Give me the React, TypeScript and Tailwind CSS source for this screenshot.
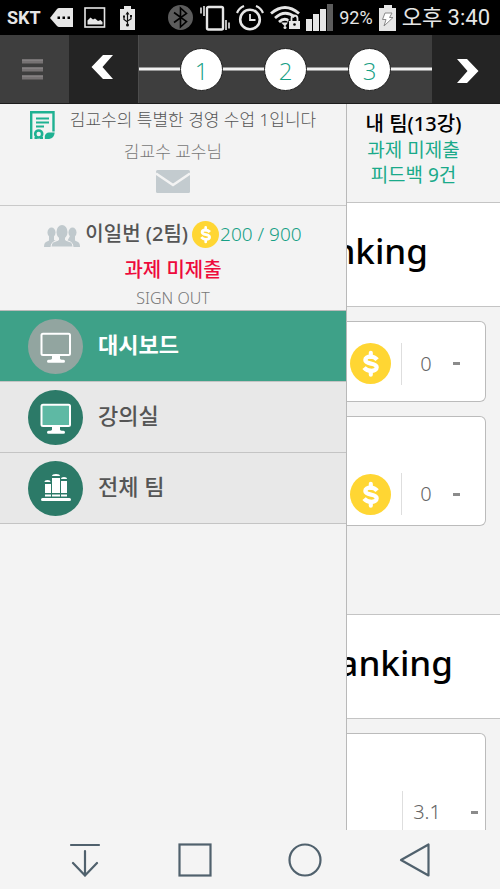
import React from 'react';

const CoinIcon: React.FC<{ className: string }> = ({ className }) => (
  <svg viewBox="0 0 40 40" className={className} aria-hidden="true">
    <circle cx="20" cy="20" r="20" fill="#ffd633" />
    <g fill="none" stroke="#fff">
      <path d="M20.300 9.500v4M20.300 27v4" strokeWidth="4" strokeLinecap="round" />
      <path d="M26.500 16.300C24.700 14.200 22.300 13.300 20 13.300C17 13.300 15 14.600 15 16.600C15 21.500 26 18.600 26 23.600C26 25.800 23.700 27.100 20.600 27.100C17.900 27.100 15.400 26 13.700 24" strokeWidth="4.200" />
    </g>
  </svg>
);

const MonitorIcon: React.FC<{ circle: string; screen: string }> = ({ circle, screen }) => (
  <svg viewBox="0 0 55 55" className="h-[55px] w-[55px] shrink-0" aria-hidden="true">
    <circle cx="27.500" cy="27.500" r="27.500" fill={circle} />
    <rect x="13.500" y="14.700" width="28.500" height="21.300" rx="1.500" fill={screen} stroke="#fff" strokeWidth="2" />
    <path d="M24 36h8v3.500c0 1 1 1.200 3.500 1.300a1.500 1.500 0 0 1 0 3h-15a1.500 1.500 0 0 1 0-3c2.500-.1 3.500-.3 3.500-1.300z" fill="#fff" />
  </svg>
);

const BooksIcon = () => (
  <svg viewBox="0 0 55 55" className="h-[55px] w-[55px] shrink-0" aria-hidden="true">
    <circle cx="27.500" cy="27.500" r="27.500" fill="#2c7a68" />
    <g fill="#fff">
      <path d="M16.500 21q0-2 3-2t3 2zM24 15q0-2 4-2t4 2zM33 18q0-2 3-2t3 2z" />
      <path d="M17 23h6v9h-6zM24 17h8v15h-8zM33 20h6v12h-6z" />
      <path d="M17 33.500h6V35.500h-6zM24 33.500h8V35.500h-8zM33 33.500h6V35.500h-6z" />
      <rect x="13" y="37" width="30" height="3" rx="1.500" />
    </g>
  </svg>
);

const StatusBar = () => (
  <div className="flex h-[35px] shrink-0 items-center justify-between bg-black pl-[7px] pr-[10px] text-[#e6e6e6]">
    <div className="flex items-center">
      <span className="w-[43px] font-['Roboto'] text-lg font-bold">SKT</span>
      <svg viewBox="0 0 24 20" className="mr-[10px] h-5 w-6" aria-hidden="true">
        <path d="M0 10L7 1q1-1 2-1h14v19H9q-1 0-2-1z" fill="currentColor" />
        <path d="M7.500 8.500h2.500v2.500h-2.500zM12.500 8.500h2.500v2.500h-2.500zM17.500 8.500h2.500v2.500h-2.500z" fill="#000" />
      </svg>
      <svg viewBox="0 0 22 22" className="mr-[14px] h-[22px] w-[22px]" aria-hidden="true">
        <rect x="1" y="1" width="19.500" height="19" fill="none" stroke="currentColor" strokeWidth="1.600" />
        <path d="M3.500 17.500v-4l3-3 2.500 2 2-1 3 2.500 2.500-1 2 2v2.500z" fill="currentColor" />
      </svg>
      <svg viewBox="0 0 16 24" className="mr-8 h-6 w-4" aria-hidden="true">
        <path d="M4 0h7v3h4v21H0V3h4z" fill="currentColor" />
        <g fill="none" stroke="#111" strokeWidth="1.200">
          <path d="M7.500 6.500v13M4 11v2.500l3.500 2.500M11 10v3L7.500 15" />
        </g>
        <path d="M5.500 8.500l2-3 2 3zM3 9.500h2v2H3zM10 9h2v2h-2z" fill="#111" />
        <circle cx="7.500" cy="19" r="1.500" fill="#111" />
      </svg>
      <svg viewBox="0 0 25 25" className="h-[25px] w-[25px]" aria-hidden="true">
        <circle cx="12.500" cy="12.500" r="12.500" fill="#5c5c5c" />
        <path d="M6 7.500l12.500 9-6 5.500V3l6 5.500-12.500 9" fill="none" stroke="#000" strokeWidth="1.600" />
      </svg>
    </div>
    <div className="flex items-center">
      <svg viewBox="0 0 30 26" className="mr-[6px] h-[26px] w-[30px]" aria-hidden="true">
        <rect x="7" y="2" width="16" height="22.500" rx="1.500" fill="none" stroke="currentColor" strokeWidth="2.400" />
        <path d="M1 2.500v6M4 1v10M26 15v10M29 17.500v6" stroke="currentColor" strokeWidth="1.600" />
      </svg>
      <svg viewBox="0 0 28 26" className="mr-[6px] h-[26px] w-7" aria-hidden="true">
        <g fill="none" stroke="currentColor">
          <circle cx="14" cy="14.500" r="9.800" strokeWidth="2.600" />
          <path d="M14 9v6h5.500" strokeWidth="1.800" />
          <path d="M1 8Q3 3 8 1M20 1q5 2 7 7" strokeWidth="2.200" />
        </g>
      </svg>
      <svg viewBox="0 0 30 24" className="mr-[6px] h-6 w-[30px]" aria-hidden="true">
        <g fill="none" stroke="currentColor" strokeWidth="2.800">
          <path d="M1 7.500Q15-4.500 29 7.500" />
          <path d="M5 12Q15 3 24.500 11" />
          <path d="M9 16q5.500-5 10-1" />
        </g>
        <path d="M11 16.500h7l-3 4z" fill="currentColor" />
        <circle cx="15" cy="21.500" r="1.500" fill="currentColor" />
        <path d="M18.500 13.500h12V24h-12z" fill="#000" />
        <path d="M19 15h11v8H19z" fill="currentColor" />
        <path d="M21.500 15v-2.500a3 3 0 0 1 6 0V15" fill="none" stroke="currentColor" strokeWidth="1.800" />
        <circle cx="24.500" cy="18.500" r="1.300" fill="#000" />
      </svg>
      <svg viewBox="0 0 27 27" className="mr-[6px] h-[27px] w-[27px]" aria-hidden="true">
        <path d="M0 15h6v12H0zM7 10h6v17H7zM14 5h6v22h-6z" fill="currentColor" />
        <path d="M21 0h6v27h-6z" fill="#5c5c5c" />
      </svg>
      <span className="mr-[6px] font-['Roboto'] text-lg">92%</span>
      <svg viewBox="0 0 17 26" className="mr-[6px] h-[26px] w-[17px]" aria-hidden="true">
        <path d="M5 0h8v3h4v23H0V3h5z" fill="currentColor" />
        <path d="M6 8h7l-2.500 4.500H14L5 21l2-6.500H3.500z" fill="#fff" stroke="#8a8a8a" strokeWidth="1" />
      </svg>
      <span className="whitespace-nowrap font-['Roboto','Noto_Sans_CJK_KR',sans-serif] text-[22px] leading-8">오후 3:40</span>
    </div>
  </div>
);

const steps = [1, 2, 3];

const Header = () => (
  <header className="flex h-[69px] shrink-0 border-b border-[#1c1c1c] bg-[#3e3e3e]">
    <button aria-label="메뉴" className="flex w-[69px] items-center justify-center pr-1">
      <svg viewBox="0 0 21 21" className="h-[21px] w-[21px]" aria-hidden="true">
        <path d="M0 .5h21v4H0zM0 8.500h21v4H0zM0 16.500h21v4H0z" fill="#767273" />
        <path d="M0 .5h21v1H0zM0 8.500h21v1H0zM0 16.500h21v1H0z" fill="#918e8f" />
      </svg>
    </button>
    <button aria-label="이전" className="flex w-[69px] items-center justify-center bg-[#242424] pb-1 pr-1">
      <svg viewBox="0 0 22 24" className="h-6 w-[22px]" aria-hidden="true">
        <path d="M12 0h10l-10.500 12L22 24H12L.5 12z" fill="#fff" />
      </svg>
    </button>
    <nav className="relative flex flex-1 items-center justify-evenly border-l border-[#4c4c4c]">
      <div className="absolute inset-x-0 top-1/2 h-[3px] -translate-y-1/2 bg-[#f1f1f1]"></div>
      {steps.map((step) => (
        <button
          key={step}
          className="relative flex h-[43px] w-[43px] items-center justify-center rounded-full border border-[#222] bg-white pt-1 font-['Open_Sans'] text-2xl font-light text-[#16a085]"
        >
          {step}
        </button>
      ))}
    </nav>
    <button aria-label="다음" className="flex w-[68px] items-center justify-center bg-[#242424] pl-1 pt-1">
      <svg viewBox="0 0 22 24" className="h-6 w-[22px]" aria-hidden="true">
        <path d="M0 0h10l11.500 12L10 24H0l10.500-12z" fill="#fff" />
      </svg>
    </button>
  </header>
);

const menuItems = [
  { label: '대시보드', icon: <MonitorIcon circle="#92a5a0" screen="#92a5a0" />, active: true },
  { label: '강의실', icon: <MonitorIcon circle="#2c7a68" screen="#5eb9a4" />, active: false },
  { label: '전체 팀', icon: <BooksIcon />, active: false },
];

const Drawer = () => (
  <aside className="w-[347px] shrink-0 border-r border-[#b9b9b9] bg-[#f3f3f3]">
    <section className="flex h-[102px] flex-col items-center border-b border-[#c9c9c9] pt-[2px]">
      <div className="flex items-start gap-[15px]">
        <svg viewBox="0 0 25 28" className="mt-[5px] h-7 w-[25px]" aria-hidden="true">
          <path d="M1.200 28V1.200h22.300v19.300" fill="none" stroke="#1fb192" strokeWidth="2.400" />
          <path d="M14.800 28v-3q1-3.500 4-3.500h5.900q-.5 5.500-5.500 6.500z" fill="#1fb192" />
          <path d="M6 7.500h13M6 11.500h13M6 15.500h8" stroke="#1fb192" strokeWidth="2" />
          <circle cx="8.700" cy="23" r="3.500" fill="none" stroke="#1fb192" strokeWidth="2.600" />
          <path d="M4.500 26h3v2h-3zM10 26h3v2h-3z" fill="#1fb192" />
        </svg>
        <h1 className="whitespace-nowrap text-[17px] font-light leading-[28px] text-[#555]">김교수의 특별한 경영 수업 1입니다</h1>
      </div>
      <p className="-mt-px text-[17px] font-light leading-[28px] text-[#777]">김교수 교수님</p>
      <button aria-label="메시지" className="mt-1">
        <svg viewBox="0 0 34 23" className="h-[23px] w-[34px]" aria-hidden="true">
          <rect width="34" height="23" rx="1.500" fill="#c3cbcf" />
          <path d="M0 3.500l17 11.500L34 3.500" fill="none" stroke="#f3f3f3" strokeWidth="2.500" />
        </svg>
      </button>
    </section>

    <section className="flex h-[104px] flex-col items-center pt-3">
      <div className="flex items-center whitespace-nowrap">
        <svg viewBox="0 0 36 22" className="mr-[5px] mt-1 h-[22px] w-9" aria-hidden="true">
          <g fill="#c0c9cd">
            <ellipse cx="7.500" cy="7.500" rx="4" ry="5" />
            <path d="M5 11h5v4l3 1.500V22H0q0-4 2-5l3-1.500z" />
            <ellipse cx="28.500" cy="7.500" rx="4" ry="5" />
            <path d="M26 11h5v4.500l3 1.500q2 1 2 5H23v-5.500z" />
            <path d="M14.500 11h7v4l5 2q2.500 1 2.500 5H7q0-4 2.500-5l5-2z" stroke="#f3f3f3" strokeWidth="1" />
            <ellipse cx="18" cy="7" rx="5.500" ry="7" />
          </g>
        </svg>
        <span className="text-xl font-medium leading-8 text-[#555]">이일번 (2팀)</span>
        <CoinIcon className="ml-1 mr-px h-[27px] w-[27px]" />
        <span className="text-[19px] font-light leading-8 text-[#16a085]">200 / 900</span>
      </div>
      <p className="mt-1 text-xl font-medium leading-8 text-[#ee0a3c]">과제 미제출</p>
      <button className="text-base font-light leading-6 text-[#777]">SIGN OUT</button>
    </section>

    <nav className="border-t border-[#bbb]">
      {menuItems.map((item) => (
        <a
          key={item.label}
          href="#"
          className={`flex h-[71px] items-center gap-[15px] border-b border-[#c4c4c4] pl-7 text-[22px] leading-8 ${
            item.active ? 'bg-[#3ea188] font-bold text-white' : 'bg-[#e8e8e8] font-medium text-[#555]'
          }`}
        >
          {item.icon}
          <span className="-mt-1">{item.label}</span>
        </a>
      ))}
    </nav>
  </aside>
);

const TeamScore: React.FC<{ score: string }> = ({ score }) => (
  <div className="flex items-center">
    <CoinIcon className="h-[41px] w-[41px] shrink-0" />
    <div className="ml-[10px] h-[42px] w-px shrink-0 bg-[#dedede]"></div>
    <span className="w-12 text-center text-xl font-light text-[#666]">{score}</span>
    <div className="ml-[3px] mr-[25px] h-[3px] w-[7px] shrink-0 bg-[#8b8b8b]"></div>
  </div>
);

const Content = () => (
  <main className="min-w-0 flex-1 overflow-hidden bg-[#f3f3f3]">
    <div className="flex h-[99px] flex-col items-center border-b border-[#c4c4c4] pr-5 pt-[6px]">
      <p className="whitespace-nowrap text-xl font-medium leading-7 text-black">내 팀(13강)</p>
      <p className="whitespace-nowrap text-[19px] leading-[25px] text-[#1aaa8a]">과제 미제출</p>
      <p className="whitespace-nowrap text-[19px] leading-[25px] text-[#1aaa8a]">피드백 9건</p>
    </div>

    <section>
      <h2 className="flex h-[104px] items-center justify-end border-b border-[#c4c4c4] bg-white pb-[6px] pr-[72px] text-[35px] font-medium text-black">Ranking</h2>
      <div className="flex flex-col gap-[14px] pb-[88px] pr-[14px] pt-[14px]">
        <div className="flex h-[81px] items-center justify-end rounded-r-md border border-l-0 border-[#bbb] bg-white pt-1">
          <TeamScore score="0" />
        </div>
        <div className="flex h-[110px] items-end justify-end rounded-r-md border border-l-0 border-[#bbb] bg-white pb-[10px]">
          <TeamScore score="0" />
        </div>
      </div>
    </section>

    <section>
      <h2 className="flex h-[105px] items-center justify-end border-y border-[#c4c4c4] bg-white pb-[6px] pr-[47px] text-[35px] font-medium text-black">Ranking</h2>
      <div className="pr-[14px] pt-[14px]">
        <div className="flex h-[110px] items-end justify-end rounded-r-md border border-l-0 border-[#bbb] bg-white pb-[9px]">
          <div className="flex items-center">
            <div className="h-[42px] w-px bg-[#dedede]"></div>
            <span className="w-12 text-center text-xl font-light text-[#666]">3.1</span>
            <div className="ml-5 mr-[7px] h-[3px] w-[7px] bg-[#8b8b8b]"></div>
          </div>
        </div>
      </div>
    </section>
  </main>
);

const SystemNav = () => (
  <nav className="flex h-[59px] shrink-0 items-center justify-center gap-[76px] bg-[#f4f4f4] text-[#50616d]">
    <button aria-label="알림창 내리기">
      <svg viewBox="0 0 34 34" className="h-[34px] w-[34px]" fill="none" stroke="currentColor" strokeWidth="2.200" strokeLinecap="round" aria-hidden="true">
        <path d="M3 2h28M17 8v24M5 20l12 12.500L29 20" />
      </svg>
    </button>
    <button aria-label="최근 앱">
      <svg viewBox="0 0 34 34" className="h-[34px] w-[34px]" fill="none" stroke="currentColor" strokeWidth="2.200" aria-hidden="true">
        <rect x="1.500" y="1.500" width="31" height="31" />
      </svg>
    </button>
    <button aria-label="홈">
      <svg viewBox="0 0 34 34" className="h-[34px] w-[34px]" fill="none" stroke="currentColor" strokeWidth="2.200" aria-hidden="true">
        <circle cx="17" cy="17" r="15.500" />
      </svg>
    </button>
    <button aria-label="뒤로">
      <svg viewBox="0 0 34 34" className="h-[34px] w-[34px]" fill="none" stroke="currentColor" strokeWidth="2.200" strokeLinejoin="round" aria-hidden="true">
        <path d="M30.500 1.500v31L3 17z" />
      </svg>
    </button>
  </nav>
);

const App: React.FC = () => {
  return (
    <div className="flex h-screen flex-col overflow-hidden bg-[#f3f3f3] font-['Noto_Sans','Noto_Sans_CJK_KR',sans-serif]">
      <StatusBar />
      <Header />
      <div className="flex min-h-0 flex-1 overflow-hidden">
        <Drawer />
        <Content />
      </div>
      <SystemNav />
    </div>
  );
};

export default App;
